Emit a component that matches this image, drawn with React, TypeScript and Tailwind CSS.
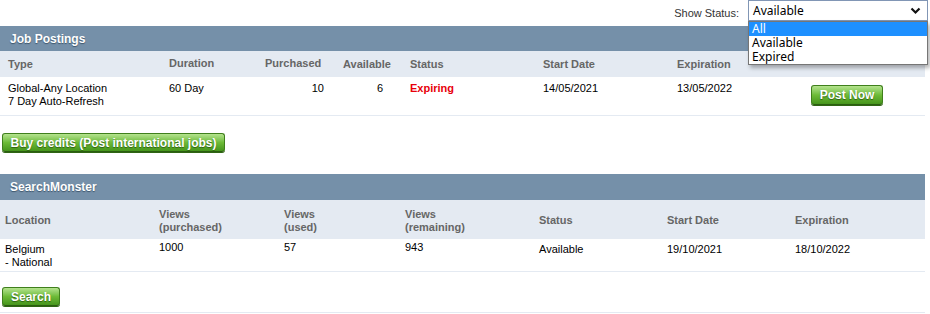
import React from "react";

const FONT = "font-['Liberation_Sans',Arial,sans-serif]";

const BTN =
  "inline-flex items-center justify-center whitespace-nowrap h-[19px] rounded-[3px] border border-[#3f7f1c] border-b-[#2b5e10] bg-linear-to-b from-[#b4e38d] via-[#6dbb37] to-[#46951c] px-0 font-['Liberation_Sans',Arial,sans-serif] text-[12px] font-bold leading-none text-white shadow-[0_1px_0_#2f6513] [text-shadow:0_1px_1px_#2d5f12]";

function SectionTitle({ title, tall }: { title: string; tall?: boolean }) {
  return (
    <div
      className={`flex ${tall ? "h-[26px]" : "h-[25px]"} items-center bg-[#7590a9] pl-[10px] text-[12px] font-bold text-white [text-shadow:0_1px_1px_#3d556b]`}
    >
      {title}
    </div>
  );
}

function JobPostings() {
  const head = "text-[11px] font-bold text-[#666]";
  return (
    <div>
      <SectionTitle title="Job Postings" />
      <div className={`flex h-[26px] items-center bg-[#e4eaf2] ${head}`}>
        <div className="w-[169px] pl-[8px] mt-[1px]">Type</div>
        <div className="w-[96px] -mt-[1px]">Duration</div>
        <div className="w-[78px] -mt-[1px]">Purchased</div>
        <div className="w-[67px] mt-[1px]">Available</div>
        <div className="w-[133px] mt-[1px]">Status</div>
        <div className="w-[134px] mt-[1px]">Start Date</div>
        <div className="w-[134px] mt-[1px]">Expiration</div>
      </div>
      <div className="flex h-[39px] items-start border-b border-[#e4eaf2] pt-[5px] text-[11px] leading-[13px] text-black">
        <div className="w-[169px] pl-[8px]">
          Global-Any Location
          <br />7 Day Auto-Refresh
        </div>
        <div className="w-[96px]">60 Day</div>
        <div className="w-[78px] pr-[19px] text-right">10</div>
        <div className="w-[67px] pr-[27px] text-right">6</div>
        <div className="w-[133px] font-bold text-[#e8000b]">Expiring</div>
        <div className="w-[134px]">14/05/2021</div>
        <div className="w-[134px]">13/05/2022</div>
        <div className="flex pt-[3px]">
          <button className={`${BTN} h-[20px] w-[72px]`}>Post Now</button>
        </div>
      </div>
      <div className="flex pt-[17px]">
        <button className={`${BTN} ml-[2px] w-[223px]`}>Buy credits (Post international jobs)</button>
      </div>
    </div>
  );
}

function SearchMonster() {
  const head = "text-[11px] font-bold leading-[13px] text-[#666]";
  return (
    <div>
      <SectionTitle title="SearchMonster" tall />
      <div className={`flex h-[39px] items-center bg-[#e4eaf2] ${head}`}>
        <div className="w-[159px] pl-[5px] mt-[1px]">Location</div>
        <div className="w-[125px] mt-[2px]">
          Views
          <br />
          (purchased)
        </div>
        <div className="w-[121px] mt-[2px]">
          Views
          <br />
          (used)
        </div>
        <div className="w-[134px] mt-[2px]">
          Views
          <br />
          (remaining)
        </div>
        <div className="w-[128px] mt-[1px]">Status</div>
        <div className="w-[128px] mt-[1px]">Start Date</div>
        <div className="mt-[1px]">Expiration</div>
      </div>
      <div className="flex h-[33px] items-start border-b border-[#e4eaf2] pt-[4px] text-[11px] leading-[13px] text-black">
        <div className="w-[159px] pl-[5px]">
          Belgium
          <br />- National
        </div>
        <div className="w-[125px] -mt-[2px]">1000</div>
        <div className="w-[121px] -mt-[2px]">57</div>
        <div className="w-[134px] -mt-[2px]">943</div>
        <div className="w-[128px]">Available</div>
        <div className="w-[128px]">19/10/2021</div>
        <div>18/10/2022</div>
      </div>
      <div className="flex h-[41px] items-start border-b border-[#e4eaf2] pt-[15px]">
        <button className={`${BTN} ml-[2px] h-[18px] w-[58px]`}>Search</button>
      </div>
    </div>
  );
}

export default function App() {
  return (
    <div className={`relative h-[314px] w-[930px] overflow-hidden bg-white ${FONT}`}>
      <div className="flex h-[26px] items-start justify-end pr-[2px]">
        <span className="mr-[9px] mt-[5px] text-[11px] text-[#333]">Show Status:</span>
        <div className="flex h-[21px] w-[180px] items-center justify-between border border-[#8196b5] bg-white pl-[4px] pr-[6px] font-['Noto_Sans',sans-serif] text-[12px] text-black">
          <span>Available</span>
          <svg width="11" height="8" viewBox="0 0 11 8">
            <path d="M1.5 1.5 L5.5 5.5 L9.5 1.5" fill="none" stroke="#111" strokeWidth="2.2" />
          </svg>
        </div>
      </div>

      <div className="w-[925px]">
        <JobPostings />
        <div className="h-[22px]" />
        <SearchMonster />
      </div>

      {/* open dropdown list */}
      <div className="absolute left-[748px] top-[21px] w-[180px] border border-[#767676] bg-white font-['Noto_Sans',sans-serif] text-[12px] leading-[14px] text-black shadow-[2px_3px_4px_rgba(0,0,0,0.3)]">
        <div className="flex h-[14px] items-center bg-[#1e90ff] pl-[3px] text-white">All</div>
        <div className="flex h-[14px] items-center pl-[3px]">Available</div>
        <div className="flex h-[14px] items-center pl-[3px]">Expired</div>
      </div>
    </div>
  );
}
